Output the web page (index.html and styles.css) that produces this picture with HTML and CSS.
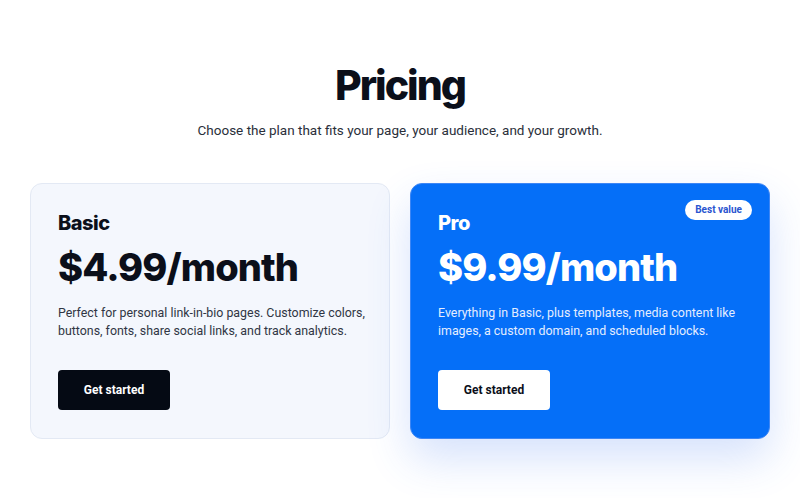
FILE: index.html
```html
<!DOCTYPE html>
<html lang="en">
<head>
    <meta charset="UTF-8">
    <meta name="viewport" content="width=device-width, initial-scale=1.0">
    <title>Pricing</title>
    <link rel="stylesheet" href="styles.css">
</head>
<body>
    <section class="pricing">
        <h1>Pricing</h1>
        <p class="lead">Choose the plan that fits your page, your audience, and your growth.</p>

        <div class="plans">
            <div class="plan">
                <h2>Basic</h2>
                <div class="price">$4.99/month</div>
                <p class="desc">Perfect for personal link-in-bio pages. Customize colors, buttons, fonts, share social links, and track analytics.</p>
                <a class="btn" href="#">Get started</a>
            </div>
            <div class="plan pro">
                <span class="badge">Best value</span>
                <h2>Pro</h2>
                <div class="price">$9.99/month</div>
                <p class="desc">Everything in Basic, plus templates, media content like images, a custom domain, and scheduled blocks.</p>
                <a class="btn" href="#">Get started</a>
            </div>
        </div>
    </section>
</body>
</html>
```

FILE: styles.css
```css
body {
    font-family: Roboto, "Noto Sans", sans-serif;
    margin: 0;
    padding: 0;
    background-color: #fff;
    color: #0b0f1a;
}
.pricing {
    max-width: 740px;
    margin: 0 auto;
    padding: 60px 0 60px;
    text-align: center;
}
h1 {
    font-family: Inter, sans-serif;
    font-size: 41px;
    font-weight: 800;
    letter-spacing: -2px;
    margin: 0;
    line-height: 50px;
}
.lead {
    font-size: 13.5px;
    color: #2a2f3a;
    margin: 12px 0 0;
}
.plans {
    display: grid;
    grid-template-columns: 1fr 1fr;
    gap: 20px;
    margin-top: 45px;
    text-align: left;
}
.plan {
    position: relative;
    background-color: #f4f7fd;
    border: 1px solid #e3e9f4;
    border-radius: 12px;
    padding: 26px 18px 28px 27px;
}
.plan h2 {
    font-family: Inter, sans-serif;
    font-size: 20px;
    font-weight: 800;
    letter-spacing: -0.5px;
    margin: 0;
    line-height: 26px;
}
.price {
    font-family: Inter, sans-serif;
    font-size: 38px;
    font-weight: 800;
    letter-spacing: -0.9px;
    line-height: 46px;
    margin-top: 8px;
}
.desc {
    font-size: 12.4px;
    line-height: 18px;
    color: #303644;
    margin: 14px 0 0;
}
.btn {
    display: inline-block;
    margin-top: 30px;
    width: 112px;
    height: 40px;
    line-height: 40px;
    text-align: center;
    font-size: 12px;
    font-weight: 700;
    text-decoration: none;
    border-radius: 4px;
    background-color: #050a14;
    color: #fff;
}
.pro {
    background-color: #056ff8;
    border-color: #3d86f5;
    color: #fff;
    box-shadow: 0 20px 44px rgba(50, 110, 240, 0.2);
}
.pro .desc {
    color: #e4edff;
}
.pro .btn {
    background-color: #fff;
    color: #0b0f1a;
}
.badge {
    position: absolute;
    top: 16px;
    right: 17px;
    background-color: #fff;
    color: #2a55d0;
    font-size: 10px;
    font-weight: 700;
    line-height: 12px;
    padding: 4px 10px;
    border-radius: 20px;
}
```
